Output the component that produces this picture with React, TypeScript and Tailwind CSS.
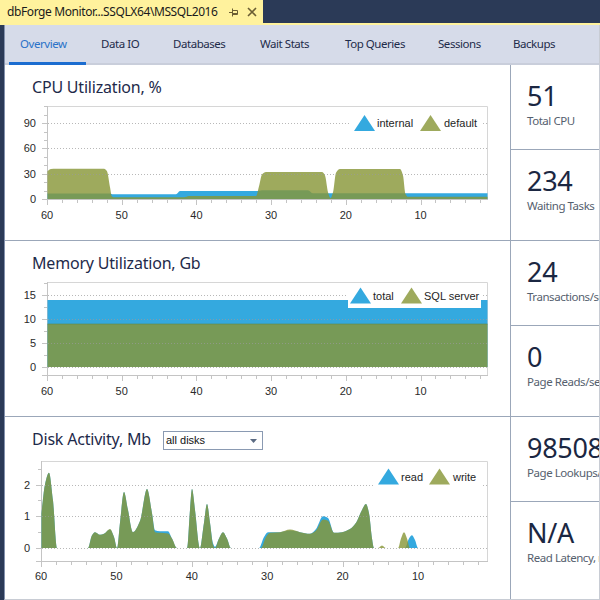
import React from "react";

type Pt = [number, number];

const BLUE = "#34a9df";
const OLIVE = "#879638";
const OLIVE_OP = 0.81;
const AXIS_FONT = "'Liberation Sans', Arial, sans-serif";

// monotone cubic through the points, so peaks stay round and never dip under zero
function smooth(pts: Pt[]): string {
  const n = pts.length;
  const d: number[] = [];
  for (let i = 0; i < n - 1; i++) {
    d.push((pts[i + 1][1] - pts[i][1]) / (pts[i + 1][0] - pts[i][0]));
  }
  const m: number[] = new Array(n).fill(0);
  m[0] = d[0];
  m[n - 1] = d[n - 2];
  for (let i = 1; i < n - 1; i++) {
    const h0 = pts[i][0] - pts[i - 1][0];
    const h1 = pts[i + 1][0] - pts[i][0];
    if (d[i - 1] * d[i] <= 0) m[i] = 0;
    else m[i] = (3 * (h0 + h1)) / ((2 * h1 + h0) / d[i - 1] + (h1 + 2 * h0) / d[i]);
  }
  let s = `M${pts[0][0]},${pts[0][1]}`;
  for (let i = 0; i < n - 1; i++) {
    const [x0, y0] = pts[i];
    const [x1, y1] = pts[i + 1];
    const h = (x1 - x0) / 3;
    s += ` C${x0 + h},${y0 + m[i] * h} ${x1 - h},${y1 - m[i + 1] * h} ${x1},${y1}`;
  }
  return s;
}

function area(data: Pt[], zeroY: number, unit: number) {
  const pts: Pt[] = data.map(([x, v]) => [x, zeroY - v * unit]);
  const first = pts[0][0];
  const last = pts[pts.length - 1][0];
  return `${smooth(pts)} L${last},${zeroY} L${first},${zeroY} Z`;
}

interface ChartCfg {
  left: number;
  right: number;
  top: number;
  bottom: number;
  zeroY: number;
  unit: number;
  yLabels: number[];
  yTick: number;
  labelRight: number;
  xAt60: number;
  xUnit: number;
  xLabelY: number;
}

function Axes({ c }: { c: ChartCfg }) {
  const yTicks: { y: number; major: boolean }[] = [];
  for (let k = -20; k < 200; k++) {
    const v = k * c.yTick;
    const y = c.zeroY - v * c.unit;
    if (y < c.top - 0.5 || y > c.bottom + 0.5) continue;
    yTicks.push({ y, major: c.yLabels.some((l) => Math.abs(l - v) < 0.001) });
  }
  const xTicks: { x: number; major: boolean }[] = [];
  for (let t = 60; t >= 0; t -= 2) {
    const x = c.xAt60 + (60 - t) * c.xUnit;
    if (x > c.right + 0.5) continue;
    xTicks.push({ x, major: t % 10 === 0 });
  }
  return (
    <g>
      <path
        d={`M${c.left},${c.top + 0.5} H${c.right + 0.5} V${c.bottom}`}
        stroke="#d6d6d6"
        fill="none"
      />
      <line x1={c.left + 0.5} y1={c.top} x2={c.left + 0.5} y2={c.bottom + 6} stroke="#c4c4c4" />
      <line x1={c.left - 5} y1={c.bottom + 0.5} x2={c.right + 1} y2={c.bottom + 0.5} stroke="#c4c4c4" />
      {yTicks.map((t, i) => (
        <line
          key={"y" + i}
          x1={c.left - (t.major ? 5 : 3)}
          x2={c.left}
          y1={Math.round(t.y) + 0.5}
          y2={Math.round(t.y) + 0.5}
          stroke="#c4c4c4"
        />
      ))}
      {xTicks.map((t, i) => (
        <line
          key={"x" + i}
          x1={Math.round(t.x) + 0.5}
          x2={Math.round(t.x) + 0.5}
          y1={c.bottom + 1}
          y2={c.bottom + (t.major ? 6 : 4)}
          stroke="#c4c4c4"
        />
      ))}
      {c.yLabels.map((v) => (
        <text
          key={"yl" + v}
          x={c.labelRight}
          y={c.zeroY - v * c.unit + 4}
          textAnchor="end"
          fontFamily={AXIS_FONT}
          fontSize={11}
          fill="#2a2a2a"
        >
          {v}
        </text>
      ))}
      {[60, 50, 40, 30, 20, 10].map((t) => (
        <text
          key={"xl" + t}
          x={c.xAt60 + (60 - t) * c.xUnit}
          y={c.xLabelY}
          textAnchor="middle"
          fontFamily={AXIS_FONT}
          fontSize={11}
          fill="#2a2a2a"
        >
          {t}
        </text>
      ))}
    </g>
  );
}

function Grid({ c, values }: { c: ChartCfg; values: number[] }) {
  return (
    <g>
      {values.map((v) => {
        const y = Math.round(c.zeroY - v * c.unit) + 0.5;
        return (
          <line
            key={v}
            x1={c.left + 1}
            x2={c.right}
            y1={y}
            y2={y}
            stroke="#9a9a9a"
            strokeOpacity={0.7}
            strokeDasharray="1 2"
          />
        );
      })}
    </g>
  );
}

function Legend({
  x,
  y,
  w,
  h,
  items,
}: {
  x: number;
  y: number;
  w: number;
  h: number;
  items: { label: string; color: string; op: number; tx: number; lx: number }[];
}) {
  const base = y + h / 2 + 8;
  return (
    <g>
      <rect x={x} y={y} width={w} height={h} fill="#fff" />
      {items.map((it) => (
        <g key={it.label}>
          <polygon
            points={`${it.tx},${base} ${it.tx + 10.5},${base - 16} ${it.tx + 21},${base}`}
            fill={it.color}
            fillOpacity={it.op}
          />
          <text x={it.lx} y={y + h / 2 + 4} fontFamily={AXIS_FONT} fontSize={11} fill="#1e1e1e">
            {it.label}
          </text>
        </g>
      ))}
    </g>
  );
}

const cpuCfg: ChartCfg = {
  left: 47,
  right: 487,
  top: 106,
  bottom: 199,
  zeroY: 199,
  unit: 25.3 / 30,
  yLabels: [0, 30, 60, 90],
  yTick: 10,
  labelRight: 36,
  xAt60: 47,
  xUnit: 7.47,
  xLabelY: 219,
};

const memCfg: ChartCfg = {
  left: 47,
  right: 487,
  top: 282,
  bottom: 375,
  zeroY: 367,
  unit: 24 / 5,
  yLabels: [0, 5, 10, 15],
  yTick: 2.5,
  labelRight: 36,
  xAt60: 47,
  xUnit: 7.47,
  xLabelY: 395,
};

const diskCfg: ChartCfg = {
  left: 41,
  right: 487,
  top: 461,
  bottom: 561,
  zeroY: 548,
  unit: 31.7,
  yLabels: [0, 1, 2],
  yTick: 0.5,
  labelRight: 30,
  xAt60: 41,
  xUnit: 7.54,
  xLabelY: 580,
};

const cpuDefault: Pt[] = [
  [47.5, 33], [51, 35.5], [56, 36], [104, 36], [107, 33], [110, 14], [112, 3], [115, 2],
  [184, 2], [189, 3.5], [256, 3.5], [259, 15], [262, 29], [266, 32], [322, 32], [325, 28],
  [328, 8], [330.5, 1], [333, 8], [336, 31], [340, 35.5], [400, 35.5], [403, 28], [405.5, 6],
  [408, 2.6], [487.5, 2.6],
];
const cpuInternal: Pt[] = [
  [47.5, 6.5], [110, 6.5], [113, 5.5], [176, 5.5], [180, 9.5], [257, 9.5], [262, 10.5],
  [308, 10.5], [313, 6.8], [487.5, 6.8],
];

const diskRead: Pt[] = [
  [41.5, 1.1], [45, 2.0], [49, 2.37], [53, 1.5], [57, 0], [88, 0], [92, 0.4], [95, 0.5],
  [100, 0.42], [104, 0.45], [110, 0.58], [114, 0.35], [117, 0], [120, 0.8], [124, 1.77],
  [128, 1.2], [133, 0.5], [140, 0.85], [147, 1.86], [152, 1.1], [155, 0.56], [160, 0.53],
  [168, 0.53], [172, 0.3], [177, 0], [187, 0], [190, 1.2], [192, 1.86], [195, 1.2], [200, 0],
  [204, 0.8], [207, 1.39], [210, 0.8], [213, 0.15], [215, 0.04], [219, 0.3], [223, 0.5],
  [227, 0.3], [231, 0], [259, 0], [264, 0.35], [268, 0.5], [280, 0.5], [290, 0.55],
  [300, 0.5], [310, 0.45], [316, 0.6], [323, 1.0], [328, 0.95], [334, 0.48], [342, 0.5],
  [350, 0.6], [356, 0.8], [362, 1.2], [366, 1.39], [369, 1.1], [372, 0.3], [374, 0],
  [405, 0], [409, 0.3], [412, 0.4], [415, 0.25], [418, 0], [487.5, 0],
];
const diskWrite: Pt[] = [
  [41.5, 1.1], [45, 2.0], [49, 2.37], [53, 1.5], [57, 0], [88, 0], [92, 0.4], [95, 0.5],
  [100, 0.42], [104, 0.45], [110, 0.6], [114, 0.35], [117, 0], [120, 0.8], [124, 1.77],
  [128, 1.2], [133, 0.5], [140, 0.85], [147, 1.86], [152, 1.1], [155, 0.5], [160, 0.48],
  [168, 0.46], [172, 0.3], [177, 0], [187, 0], [190, 1.2], [192, 1.86], [195, 1.2], [200, 0],
  [204, 0.8], [207, 1.39], [210, 0.8], [213, 0.1], [215, 0], [219, 0.3], [223, 0.5],
  [227, 0.3], [231, 0], [261, 0], [266, 0.35], [270, 0.48], [280, 0.5], [290, 0.58],
  [300, 0.5], [310, 0.45], [316, 0.55], [323, 0.9], [328, 0.86], [334, 0.48], [342, 0.5],
  [350, 0.6], [356, 0.8], [362, 1.2], [366, 1.39], [369, 1.1], [372, 0.3], [374, 0],
  [378, 0], [382, 0.08], [386, 0], [398, 0], [401, 0.3], [404, 0.5], [407, 0.3], [410, 0],
  [487.5, 0],
];

function CpuChart() {
  const c = cpuCfg;
  return (
    <svg width={505} height={140} viewBox="5 100 505 140" className="block">
      <Axes c={c} />
      <path d={area(cpuInternal, c.zeroY, c.unit)} fill={BLUE} />
      <path d={area(cpuDefault, c.zeroY, c.unit)} fill={OLIVE} fillOpacity={OLIVE_OP} />
      <Grid c={c} values={[30, 60, 90]} />
      <Legend
        x={350}
        y={111}
        w={131}
        h={24}
        items={[
          { label: "internal", color: BLUE, op: 1, tx: 354, lx: 377 },
          { label: "default", color: OLIVE, op: OLIVE_OP, tx: 420, lx: 444 },
        ]}
      />
    </svg>
  );
}

function MemoryChart() {
  const c = memCfg;
  return (
    <svg width={505} height={140} viewBox="5 276 505 140" className="block">
      <Axes c={c} />
      <rect x={47.5} y={300} width={440} height={67} fill={BLUE} />
      <rect x={47.5} y={324} width={440} height={43} fill={OLIVE} fillOpacity={OLIVE_OP} />
      <line x1={47.5} x2={487.5} y1={324} y2={324} stroke="#5f8a4a" strokeOpacity={0.6} />
      <Grid c={c} values={[0, 5, 10, 15]} />
      <Legend
        x={348}
        y={283}
        w={133}
        h={25}
        items={[
          { label: "total", color: BLUE, op: 1, tx: 350, lx: 373 },
          { label: "SQL server", color: OLIVE, op: OLIVE_OP, tx: 401, lx: 424 },
        ]}
      />
    </svg>
  );
}

function DiskChart() {
  const c = diskCfg;
  return (
    <svg width={505} height={147} viewBox="5 452 505 147" className="block">
      <Axes c={c} />
      <path d={area(diskRead, c.zeroY, c.unit)} fill={BLUE} />
      <path d={area(diskWrite, c.zeroY, c.unit)} fill={OLIVE} fillOpacity={OLIVE_OP} />
      <Grid c={c} values={[0, 1, 2]} />
      <Legend
        x={375}
        y={465}
        w={106}
        h={23}
        items={[
          { label: "read", color: BLUE, op: 1, tx: 378, lx: 401 },
          { label: "write", color: OLIVE, op: OLIVE_OP, tx: 429, lx: 453 },
        ]}
      />
    </svg>
  );
}

const tabs = [
  { label: "Overview", w: "w-[81px]" },
  { label: "Data IO", w: "w-[72px]" },
  { label: "Databases", w: "w-[87px]" },
  { label: "Wait Stats", w: "w-[85px]" },
  { label: "Top Queries", w: "w-[93px]" },
  { label: "Sessions", w: "w-[75px]" },
  { label: "Backups", w: "w-[70px]" },
];

const stats = [
  { value: "51", label: "Total CPU", h: "h-[85px]" },
  { value: "234", label: "Waiting Tasks", h: "h-[91px]" },
  { value: "24", label: "Transactions/sec", h: "h-[85px]" },
  { value: "0", label: "Page Reads/sec", h: "h-[91px]" },
  { value: "98508", label: "Page Lookups/sec", h: "h-[85px]" },
  { value: "N/A", label: "Read Latency, ms", h: "flex-1" },
];

function PanelTitle({ children }: { children: React.ReactNode }) {
  return (
    <div className="text-[16px] leading-none text-[#1e2a4a] tracking-[-0.2px] whitespace-nowrap">
      {children}
    </div>
  );
}

export default function App() {
  return (
    <div className="w-[600px] h-[600px] overflow-hidden bg-[#2b3a57] flex flex-col font-['Noto_Sans',sans-serif]">
      {/* document tab */}
      <div className="h-[23px] flex shrink-0">
        <div className="w-[263px] bg-[#fff29d] flex items-start pt-[6px] pl-[7px] text-[12px] leading-none text-[#1b1b1b] tracking-[-0.4px] whitespace-nowrap">
          <span>dbForge Monitor...SSQLX64\MSSQL2016</span>
          <svg width="10" height="10" viewBox="0 0 10 10" className="ml-[11px] mt-[1px]">
            <path d="M0 5.5 H3 M3.5 1.5 V9.5 M4 3.5 H8.5 V7.5 H4" stroke="#6b5e33" strokeWidth="1" fill="none" />
            <path d="M4 6.5 H8.5" stroke="#6b5e33" strokeWidth="1" />
          </svg>
          <svg width="10" height="10" viewBox="0 0 10 10" className="ml-[8px] mt-[1px]">
            <path d="M1 1 L9 9 M9 1 L1 9" stroke="#6b5e33" strokeWidth="1.6" />
          </svg>
        </div>
      </div>
      <div className="h-[2px] bg-[#fff29d] shrink-0" />

      <div className="flex flex-1 min-h-0">
        <div className="w-[4px] shrink-0" />
        <div className="flex-1 flex flex-col bg-white border-l border-r border-b border-l-[#8391ad] border-r-[#c8ccd4] border-b-[#c8ccd4] min-w-0">
          {/* view tabs */}
          <div className="relative h-[40px] shrink-0 bg-[#d6dbe9] border-b-2 border-[#c9cedb] flex items-center pl-[15px] text-[11.5px] tracking-[-0.45px] text-[#1e2b4a] whitespace-nowrap">
            {tabs.map((t, i) => (
              <div key={t.label} className={`${t.w} shrink-0 ${i === 0 ? "text-[#2a72c8]" : ""}`}>
                {t.label}
              </div>
            ))}
            <div className="absolute left-[4px] bottom-[-2px] w-[77px] h-[3px] bg-[#1c6dd0]" />
          </div>

          <div className="flex flex-1 min-h-0">
            {/* charts */}
            <div className="w-[505px] shrink-0 flex flex-col">
              <div className="h-[176px] border-b border-[#9ba7b9] flex flex-col">
                <div className="h-[35px] pt-[14px] pl-[27px]">
                  <PanelTitle>CPU Utilization, %</PanelTitle>
                </div>
                <CpuChart />
              </div>
              <div className="h-[176px] border-b border-[#9ba7b9] flex flex-col">
                <div className="h-[35px] pt-[14px] pl-[27px]">
                  <PanelTitle>Memory Utilization, Gb</PanelTitle>
                </div>
                <MemoryChart />
              </div>
              <div className="flex-1 flex flex-col min-h-0">
                <div className="h-[35px] pt-[14px] pl-[27px] flex items-start">
                  <div className="w-[131px] shrink-0">
                    <PanelTitle>Disk Activity, Mb</PanelTitle>
                  </div>
                  <div className="w-[100px] h-[19px] border border-[#8a9ab2] flex items-center justify-between pl-[2px] pr-[5px] font-['Liberation_Sans',Arial,sans-serif] text-[11px] text-[#111]">
                    <span>all disks</span>
                    <svg width="7" height="4" viewBox="0 0 7 4">
                      <path d="M0 0 H7 L3.5 4 Z" fill="#5b6b83" />
                    </svg>
                  </div>
                </div>
                <DiskChart />
              </div>
            </div>

            {/* stats */}
            <div className="flex-1 min-w-0 border-l border-[#9ba7b9] flex flex-col overflow-hidden">
              {stats.map((s, i) => (
                <div
                  key={s.label}
                  className={`${s.h} shrink-0 pl-[16px] pt-[17px] whitespace-nowrap ${
                    i < stats.length - 1 ? "border-b border-[#9ba7b9]" : ""
                  }`}
                >
                  <div className="text-[27px] leading-none text-[#1b2742] tracking-[-0.3px]">{s.value}</div>
                  <div className="mt-[6px] text-[11.5px] leading-none text-[#55606e] tracking-[-0.45px]">
                    {s.label}
                  </div>
                </div>
              ))}
            </div>
          </div>
        </div>
      </div>
    </div>
  );
}
